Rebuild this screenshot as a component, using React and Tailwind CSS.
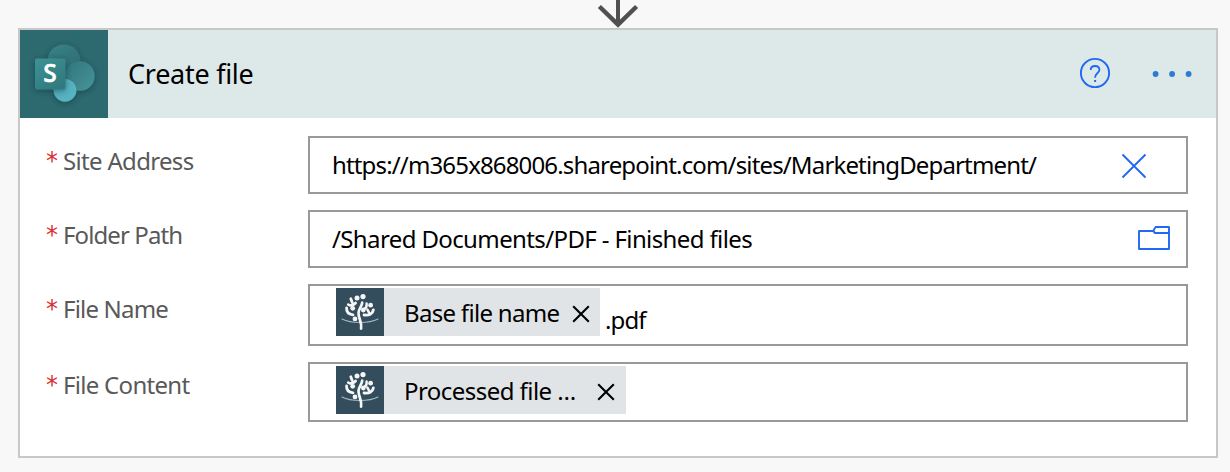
function DownArrow() {
  return (
    <svg width="44" height="28" viewBox="0 0 44 28" fill="none" className="block" aria-hidden="true">
      <path d="M22 0V25" stroke="#505050" strokeWidth="4" />
      <path d="M3.4 6.5L22 24.6L40.6 6.5" stroke="#505050" strokeWidth="4.4" />
    </svg>
  );
}

function SharePointLogo() {
  return (
    <svg width="88" height="88" viewBox="0 0 88 88" className="block shrink-0 bg-[#2d6a70]" aria-label="SharePoint">
      <defs>
        <linearGradient id="top" x1="0" y1="0" x2="0.6" y2="1">
          <stop offset="0" stopColor="#3a8489" />
          <stop offset="1" stopColor="#2c6a70" />
        </linearGradient>
        <linearGradient id="right" x1="0" y1="0" x2="1" y2="1">
          <stop offset="0" stopColor="#31767c" />
          <stop offset="1" stopColor="#469499" />
        </linearGradient>
        <linearGradient id="tile" x1="0" y1="0" x2="0.7" y2="1">
          <stop offset="0" stopColor="#3e9294" />
          <stop offset="1" stopColor="#2f7a7e" />
        </linearGradient>
        <filter id="shade" x="-40%" y="-40%" width="180%" height="180%">
          <feDropShadow dx="0" dy="1.5" stdDeviation="3" floodColor="#0c3034" floodOpacity="0.55" />
        </filter>
      </defs>
      <g filter="url(#shade)">
        <circle cx="44" cy="31" r="16.5" fill="url(#top)" />
        <circle cx="60" cy="46" r="14.7" fill="url(#right)" />
        <circle cx="45" cy="60.3" r="11.4" fill="#56b3c2" />
      </g>
      <rect x="15" y="28.5" width="30.5" height="31" rx="2" fill="url(#tile)" filter="url(#shade)" />
      <text x="30" y="52.2" textAnchor="middle" fontSize="24.5" fontWeight="600" fill="#fff" stroke="#fff" strokeWidth="0.5" fontFamily='"Open Sans", "Noto Sans", sans-serif'>S</text>
    </svg>
  );
}

function HelpIcon() {
  return (
    <svg width="32" height="32" viewBox="0 0 32 32" fill="none" stroke="#2169f2" className="block" aria-label="Help">
      <circle cx="16" cy="16" r="14.1" strokeWidth="1.9" />
      <path d="M11.7 13.1C11.7 10.6 13.5 9 16.1 9C18.7 9 20.4 10.5 20.4 12.8C20.4 16 16.1 16.2 16.1 20.7" strokeWidth="1.8" />
      <path d="M15.1 24H17.1" strokeWidth="2" />
    </svg>
  );
}

function MoreIcon() {
  return (
    <svg width="40" height="8" viewBox="0 0 40 8" fill="#2b7cd3" className="block" aria-label="More">
      <circle cx="3.6" cy="4" r="2.9" />
      <circle cx="20.1" cy="4" r="2.9" />
      <circle cx="36.6" cy="4" r="2.9" />
    </svg>
  );
}

function ClearIcon() {
  return (
    <svg width="26" height="26" viewBox="0 0 26 26" fill="none" stroke="#2169f2" strokeWidth="1.9" className="block" aria-label="Clear">
      <path d="M1.5 1.5L24.5 24.5M24.5 1.5L1.5 24.5" />
    </svg>
  );
}

function FolderIcon() {
  return (
    <svg width="32" height="24" viewBox="0 0 32 24" fill="none" stroke="#2169f2" strokeWidth="1.9" strokeLinejoin="round" className="block" aria-label="Browse">
      <path d="M1 5H15.2L17 7H31V23H1Z" />
      <path d="M15.2 5L17.6 1H31V7" />
    </svg>
  );
}

function TreeIcon() {
  return (
    <svg width="48" height="48" viewBox="0 0 48 48" fill="none" stroke="#f4f6f7" strokeLinecap="round" className="block shrink-0 bg-[#344d5c]" aria-hidden="true">
      <path d="M6 31C15 35.6 33 35.6 42 31" stroke="#a9b7be" strokeWidth="1.1" />
      <path d="M25.1 40.6C26.2 34 22.4 30.5 22.5 25C22.6 20.5 26 18.5 26.2 14.6" strokeWidth="2.7" />
      <path d="M17 26.8C12.8 26.2 10.3 23.8 10.6 19.8" strokeWidth="2.8" />
      <path d="M12.3 16.6C14.5 18 17.5 17.2 19.6 15M14.8 10.8L16.2 14.6" strokeWidth="2.8" />
      <path d="M28 27C33 27.8 36.8 25.8 37.4 21.8" strokeWidth="2.8" />
      <path d="M27.6 21.6C30 20.2 31 18.6 30.6 15.6M31.4 21.6L33.6 25.6" strokeWidth="2.5" />
      <g fill="#f4f6f7" stroke="none">
        <circle cx="21" cy="10.1" r="2.5" />
        <circle cx="27" cy="8.6" r="2.6" />
        <circle cx="16.7" cy="20.3" r="2.4" />
        <circle cx="34.6" cy="17.2" r="2.4" />
        <circle cx="27.3" cy="22" r="2.4" />
        <circle cx="19" cy="30.9" r="2.4" />
      </g>
    </svg>
  );
}

function Token({ children, className, closeClass }) {
  return (
    <div className={`flex h-12 items-center bg-[#e1e4e6] ${className}`}>
      <TreeIcon />
      <span className="ml-5 flex-1 pt-px">{children}</span>
      <svg width="18" height="18" viewBox="0 0 18 18" fill="none" stroke="#000" strokeWidth="2.1" className={`mt-1 block ${closeClass}`} aria-label="Remove">
        <path d="M1.2 1.2L16.8 16.8M16.8 1.2L1.2 16.8" />
      </svg>
    </div>
  );
}

function Field({ label, labelClass = "pt-[9px]", boxClass, children }) {
  return (
    <div className="flex items-start">
      <div className={`flex w-[288px] shrink-0 pl-[26px] leading-8 text-[#595959] ${labelClass}`}>
        <span className="w-[17px] font-['DejaVu_Sans',sans-serif] text-[#dc2f2f]">*</span>
        {label}
      </div>
      <div className={`flex w-[880px] border-2 border-[#999] bg-white text-black ${boxClass}`}>{children}</div>
    </div>
  );
}

export default function App() {
  return (
    <div className="flex h-[472px] w-[1230px] flex-col overflow-hidden bg-[#f8f8f8] pl-[18px] font-['Noto_Sans',sans-serif] text-[24px] whitespace-nowrap">
      <div className="flex h-7 w-[1200px] justify-center">
        <DownArrow />
      </div>
      <section className="h-[430px] w-[1200px] border-2 border-[#c8c8c8] bg-white">
        <header className="flex h-[88px] items-center bg-[#dde8e9]">
          <SharePointLogo />
          <h1 className="ml-5 flex-1 text-[27px] tracking-[-0.27px] text-black">Create file</h1>
          <div className="mr-[41px] pb-0.5"><HelpIcon /></div>
          <div className="mr-6"><MoreIcon /></div>
        </header>
        <div className="flex flex-col gap-4 pt-[18px]">
          <Field label={<span className="tracking-[-0.68px]">Site Address</span>} boxClass="h-[58px] items-center pl-[22px]">
            <span className="flex-1 tracking-[-0.85px]">https://m365x868006.sharepoint.com/sites/MarketingDepartment/</span>
            <div className="mr-[39px] pt-0.5"><ClearIcon /></div>
          </Field>
          <Field label={<span className="tracking-[-0.9px]">Folder Path</span>} boxClass="h-[58px] items-center pl-[22px]">
            <span className="flex-1 tracking-[-0.62px]">/Shared Documents/PDF - Finished files</span>
            <div className="mr-4 pb-0.5"><FolderIcon /></div>
          </Field>
          <Field label={<span className="tracking-[-0.8px]">File Name</span>} boxClass="h-[62px] items-start pt-0.5 pl-[26px]">
            <Token className="w-[264px]" closeClass="mr-[10px]"><span className="tracking-[-0.7px]">Base file name</span></Token>
            <span className="mt-3.5 ml-[5px] tracking-[-0.9px]">.pdf</span>
          </Field>
          <Field label={<span className="tracking-[-0.7px]">File Content</span>} labelClass="pt-[7px]" boxClass="h-[60px] items-start pt-0.5 pl-[26px]">
            <Token className="w-[290px]" closeClass="mr-[11px]"><span className="tracking-[-0.55px]">Processed file …</span></Token>
          </Field>
        </div>
      </section>
    </div>
  );
}
